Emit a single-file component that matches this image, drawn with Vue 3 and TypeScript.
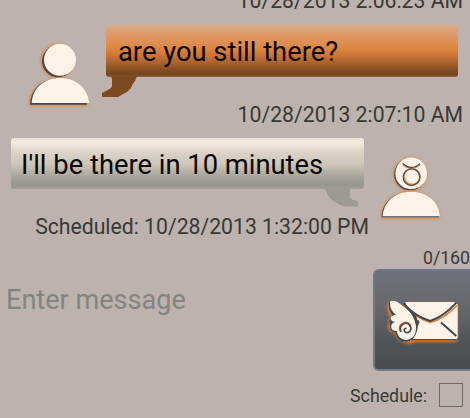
<script setup lang="ts">
import { ref } from 'vue'

interface Message {
  id: number
  text: string
  incoming: boolean
  stamp: string
}

const previousStamp = '10/28/2013 2:06:23 AM'
const messages: Message[] = [
  { id: 1, text: 'are you still there?', incoming: true, stamp: '10/28/2013 2:07:10 AM' },
  { id: 2, text: "I'll be there in 10 minutes", incoming: false, stamp: 'Scheduled: 10/28/2013 1:32:00 PM' },
]
const draft = ref('')
const scheduled = ref(false)
</script>

<template>
  <main class="screen">
    <div class="stamp first">{{ previousStamp }}</div>
    <section v-for="m in messages" :key="m.id" class="entry" :class="m.incoming ? 'incoming' : 'outgoing'">
      <div class="line">
        <svg class="avatar" viewBox="0 0 75 75" width="75" height="75">
          <template v-if="m.incoming">
            <g class="glow">
              <circle cx="37.600" cy="26" r="16" />
              <path d="M9.600 70C10 55 22 44.800 39 44.800S66 56 66.500 70Z" />
            </g>
            <g class="shade">
              <circle cx="38" cy="26.200" r="16" />
              <path d="M10 69.800C10.500 54 22 43.500 38 43.500S66 56 67 69.800Z" />
            </g>
            <g class="face">
              <circle cx="40" cy="24.700" r="16" />
              <path d="M11.700 68C12.500 53 24 43 40 43S68 53 69 68Z" />
            </g>
          </template>
          <template v-else>
            <g class="glow">
              <circle cx="35" cy="24.500" r="16" />
              <path d="M6.500 67.500C7 53 19 42.500 35 42.500S63 53 63.500 67.500Z" />
            </g>
            <g class="shade">
              <circle cx="35" cy="24.500" r="15.800" />
              <path d="M6.700 67.200C7 52 19 42.300 35 42.300S63 53 64 67.200Z" />
            </g>
            <g class="face">
              <circle cx="36.200" cy="23.400" r="15.800" />
              <path d="M7.700 66.200C8.500 51.500 20 41.700 36 41.700S64 51.500 64.700 66.200Z" />
            </g>
            <g class="sign-glow">
              <circle cx="37.100" cy="26.600" r="8" />
              <path d="M28 14.200Q31.500 18.200 37 18.300Q42 18 45 14" />
            </g>
            <g class="sign">
              <circle cx="36.500" cy="27.200" r="8.300" />
              <path d="M27.800 13.300Q31.500 17.500 36.300 17.500Q41.500 17.300 44.700 13.300" />
            </g>
          </template>
        </svg>
        <div class="bubble">
          <span class="text">{{ m.text }}</span>
          <svg v-if="m.incoming" class="tail" viewBox="0 0 36 22" width="36" height="22">
            <path d="M9 0H35L33 5L31 7.500L29 12L25 16L21 18L16 21H0V17L4 15L9 12L10 10V3Z" fill="#7c4a20" />
          </svg>
          <svg v-else class="tail" viewBox="0 0 36 22" width="36" height="22">
            <path d="M0 0H26V10L28 12.500L34 14.500V19.500H21L15 17.500L9 14L4 9L2 4Z" fill="#9c9a92" />
          </svg>
        </div>
      </div>
      <div class="stamp">{{ m.stamp }}</div>
    </section>
    <form class="composer" @submit.prevent>
      <input v-model="draft" class="draft" type="text" placeholder="Enter message" />
      <div class="side">
        <span class="count">{{ draft.length }}/160</span>
        <button class="send" type="submit" aria-label="Send">
          <svg viewBox="0 0 76 48" width="76" height="48">
            <path class="envelope-glow" d="M20 10H69V43H28Q20 47 11 40L8 34Q2 33 2 28Q3 20 5 20Q0 12 2 6Z" />
            <path d="M24 12H69V42.200H24Z" fill="#464b50" />
            <path d="M18 4H69L70.700 7V39.500L69.500 41H26V20Z" fill="#fff2e7" />
            <path d="M19 9Q29 20 43.500 24.500Q57 21 70 7.500" fill="none" stroke="#dc8545" stroke-width="1.800" />
            <path d="M16.500 5.500Q28 18.500 43.200 23Q57 18.500 69.500 4.500M54 24.500L69.300 38" fill="none" stroke="#41464a" stroke-width="1.900" />
            <path d="M1.800 5Q1 12 6 18.500Q1 22 3 28Q2 33 8.500 34.500Q10 44 19 43.700Q28 43 30.500 31Q33 18 22 10Z" fill="#464b50" />
            <path d="M3.200 3.500Q8 1 15 7.500Q25 14 28 23.500Q31 33 26 39Q20 44.500 13.500 40Q10 37 10 33Q4 33 4.200 28.500Q4 25 8 24Q2.500 23 4 19Q5.500 17 9 17Q2 11 3.200 3.500Z" fill="#fff2e7" />
            <path d="M13 33Q11 28 15.500 25.500Q20 22.500 24 27" fill="none" stroke="#dc8545" stroke-width="1.500" />
            <path d="M14 34Q12 29 15.500 26.500Q20 23.500 23 27.500Q25.500 32.500 21 34.500Q17.500 35 17.200 32Q17.500 30 19.500 30.500" fill="none" stroke="#484b4b" stroke-width="1.700" />
            <path d="M28.500 23.500L32.500 24.500M31 22V27" fill="none" stroke="#484b4b" stroke-width="1.500" />
          </svg>
        </button>
        <label class="schedule"><span class="caption">Schedule:</span><input v-model="scheduled" type="checkbox" /></label>
      </div>
    </form>
  </main>
</template>

<style>
body {
  background: #bdb2ad;
  overflow: hidden;
}
</style>

<style scoped>
.screen {
  box-sizing: border-box;
  width: 470px;
  height: 418px;
  overflow: hidden;
  background: #bdb2ad;
  font-family: Roboto, sans-serif;
  color: #393936;
}
.stamp {
  height: 26px;
  padding-right: 7px;
  font-size: 21.2px;
  line-height: 26px;
  text-align: right;
  white-space: nowrap;
}
.first {
  margin-top: -12px;
}
.line {
  display: flex;
  align-items: flex-start;
}
.incoming .line {
  height: 88px;
  padding-left: 20px;
}
.outgoing .line {
  flex-direction: row-reverse;
  justify-content: flex-end;
  height: 86px;
  padding-left: 11px;
}
.outgoing .stamp {
  padding-right: 101px;
}
.avatar {
  flex: none;
  margin-top: 21px;
}
.outgoing .avatar {
  margin: 22px 0 0 11px;
}
.bubble {
  position: relative;
  box-sizing: border-box;
  flex: none;
  width: 352px;
  height: 52px;
  margin: 11px 0 0 11px;
  padding-left: 12px;
  border-radius: 3px;
  background: linear-gradient(#d7ad8c 0, #dda071 5px, #df9661 12px, #dd853f 24px, #c97336 31px, #7c4a20 47px, #75441b 50px, #936a4b 52px);
}
.outgoing .bubble {
  width: 353px;
  height: 51px;
  margin: 10px 0 0;
  padding-left: 10px;
  background: linear-gradient(#eee1d7 0, #f7ece0 4px, #ded5c8 13px, #cec6b8 26px, #aaa69c 38px, #96958f 47px, #a3a099 51px);
}
.text {
  display: block;
  font-size: 27.35px;
  line-height: 54px;
  color: #080604;
  white-space: nowrap;
}
.tail {
  position: absolute;
  top: 51px;
  left: -4px;
}
.outgoing .tail {
  top: 49px;
  left: 313px;
}
.glow {
  fill: #e08338;
  stroke: #e08338;
  stroke-width: 1.5;
  filter: blur(1.5px);
}
.shade {
  fill: #464b50;
}
.face {
  fill: #fff2e7;
}
.sign {
  fill: none;
  stroke: #555553;
  stroke-width: 1.3;
}
.sign-glow {
  fill: none;
  stroke: #d99560;
  stroke-width: 1.8;
}
.composer {
  display: flex;
  height: 178px;
}
.draft {
  flex: 1;
  min-width: 0;
  height: 40px;
  margin: 40px 0 0;
  padding: 0 0 0 6px;
  border: 0;
  outline: 0;
  background: transparent;
  font: 27.1px/40px Roboto, sans-serif;
}
.draft::placeholder {
  color: #858382;
}
.side {
  display: flex;
  flex-direction: column;
  align-items: flex-end;
  width: 130px;
}
.count {
  height: 29px;
  font-size: 17.7px;
  line-height: 37px;
}
.send {
  display: flex;
  align-items: center;
  justify-content: flex-start;
  box-sizing: border-box;
  width: 97px;
  height: 102px;
  padding: 4px 0 0 12px;
  border: 2px solid #70798a;
  border-right: 0;
  border-radius: 6px 0 0 6px;
  background: linear-gradient(#6d717c, #68696e 35%, #50555a 70%, #484c50);
}
.send svg {
  flex: none;
  overflow: visible;
}
.envelope-glow {
  fill: #f08427;
  stroke: #f08427;
  stroke-width: 1.5;
  filter: blur(1.5px);
}
.schedule {
  display: flex;
  align-items: center;
  gap: 12px;
  height: 24px;
  margin-top: 12px;
  padding-right: 7px;
  font-size: 17.8px;
  line-height: 24px;
}
.caption {
  padding-top: 2px;
}
.schedule input {
  appearance: none;
  box-sizing: border-box;
  width: 24px;
  height: 24px;
  margin: 0;
  border: 1px solid #706b67;
}
</style>
